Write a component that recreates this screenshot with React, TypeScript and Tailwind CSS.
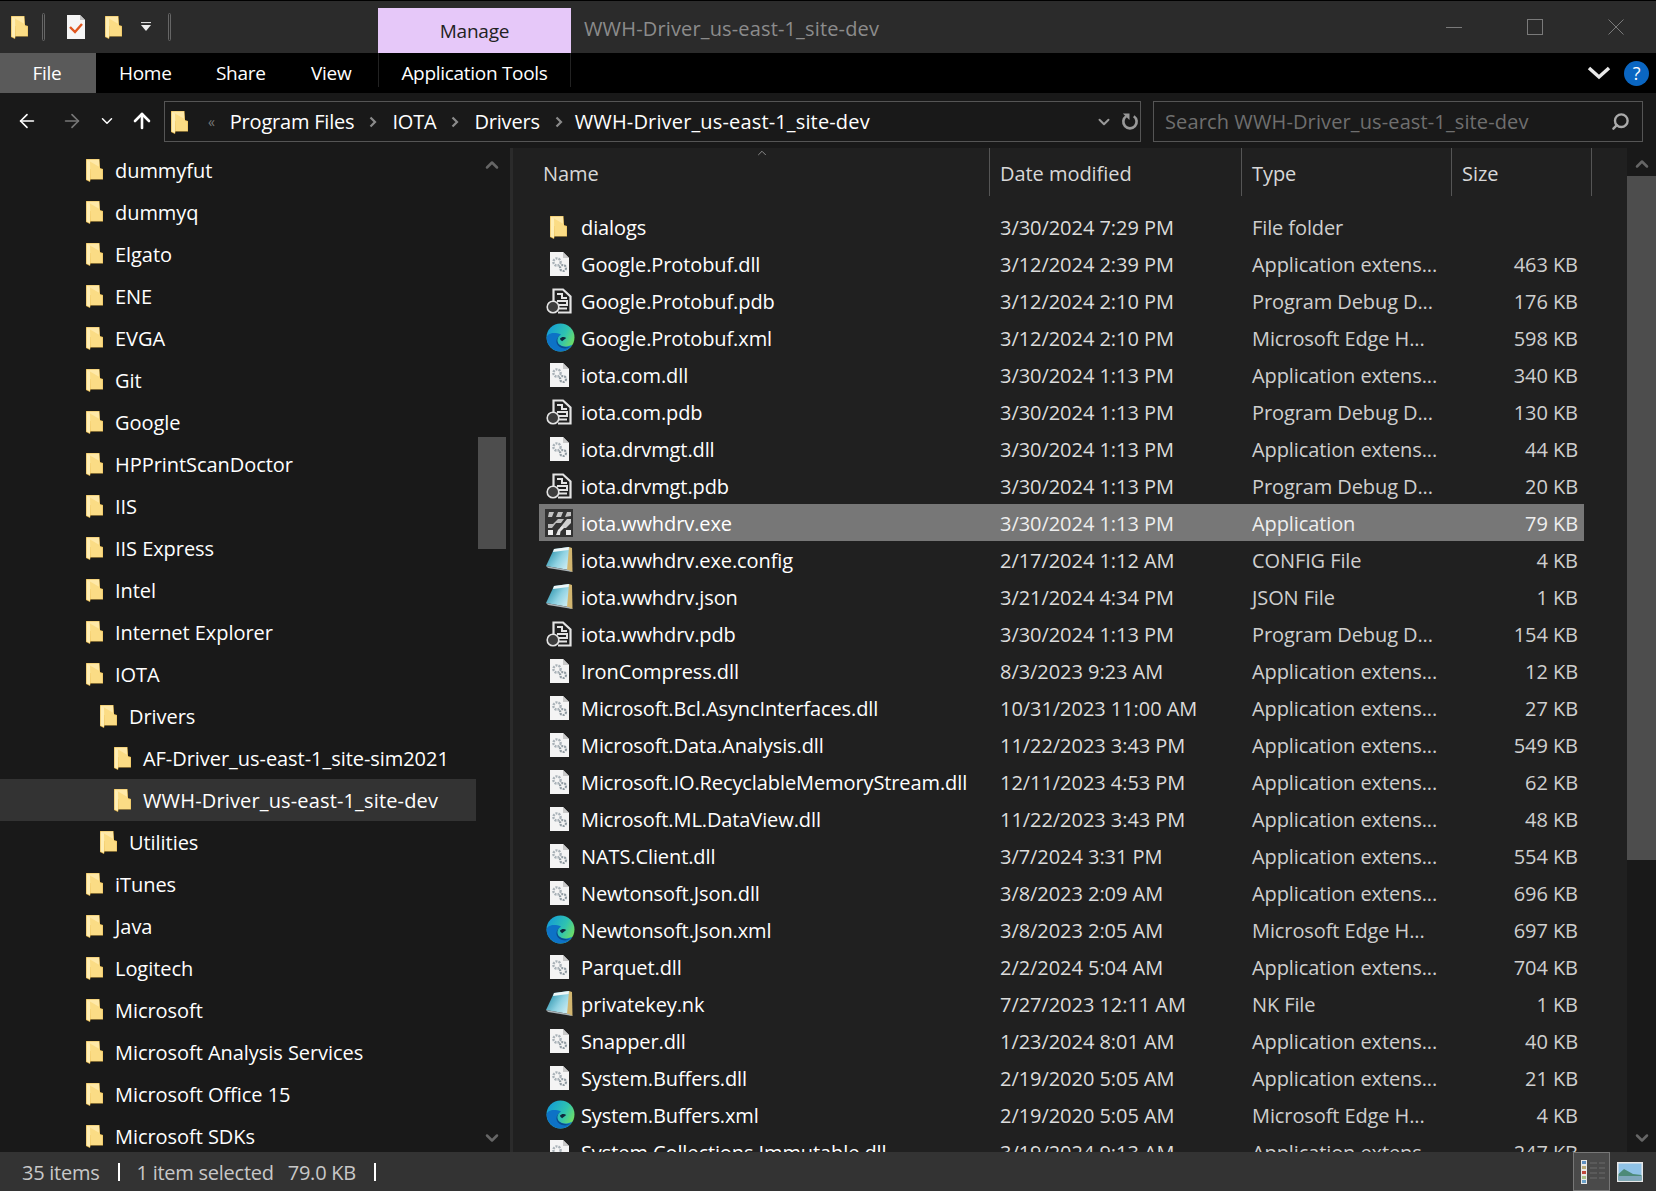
import { ChevronDown, ChevronUp, ArrowLeft, ArrowRight, ArrowUp, Search } from 'lucide-react';

const FolderIcon = () => (
  <svg viewBox="0 0 17 24" className="w-[17px] h-[24px] shrink-0">
    <path d="M0 1 H13.5 L14 10 L17 11 V21.5 H4.5 L4 24 L0 22 Z" fill="#e9bd55" />
    <path d="M1 1.5 H13 L13.5 11 H4 L1 3 Z" fill="#ffe9a8" />
    <path d="M4 3.5 L13.5 9 L14 11 L16.5 11.5 V21 H4.5 Z" fill="#fbdc85" />
    <path d="M0.6 2 L4 4 V23 L0.6 21.5 Z" fill="#ffeeb4" />
  </svg>
);

const DllIcon = () => (
  <svg viewBox="0 0 24 26" className="w-[24px] h-[26px]">
    <path d="M3 1 H16 L22 7 V25 H3 Z" fill="#f4f4f4" />
    <path d="M16 1 V7 H22 Z" fill="#c9c9c9" />
    <circle cx="10" cy="11" r="3.6" fill="none" stroke="#a9b2b8" strokeWidth="2.4" strokeDasharray="2 1" />
    <circle cx="16" cy="17" r="3" fill="none" stroke="#8f9aa1" strokeWidth="2.2" strokeDasharray="2 1" />
  </svg>
);

const PdbIcon = () => (
  <svg viewBox="0 0 26 26" className="w-[26px] h-[26px]">
    <path d="M7.5 13 V1.5 H17 L24.5 8.5 V24.5 H12" fill="none" stroke="#e4e4e4" strokeWidth="2.2" />
    <path d="M11 6 H16 V10 H21" fill="none" stroke="#e4e4e4" strokeWidth="2" />
    <path d="M11 13 H21 V17 H13 M13 20.5 H21" fill="none" stroke="#e4e4e4" strokeWidth="2" />
    <circle cx="7" cy="19" r="5.8" fill="#3d3d3d" stroke="#e4e4e4" strokeWidth="1.6" />
  </svg>
);

const EdgeIcon = () => (
  <svg viewBox="0 0 28 28" className="w-[29px] h-[29px] ml-[3px]">
    <defs>
      <linearGradient id="edgeTop" x1="0" y1="0.2" x2="1" y2="0.7">
        <stop offset="0" stopColor="#129bd8" />
        <stop offset="0.6" stopColor="#2fc3b0" />
        <stop offset="1" stopColor="#74e05e" />
      </linearGradient>
    </defs>
    <circle cx="14" cy="14" r="13.5" fill="url(#edgeTop)" />
    <path d="M0.6 14 C1 22 7 27.5 14 27.5 C19 27.5 23 25 25.5 21 C21 23 16 23.5 13 21 C9 18 10 13 14.5 11 C8 8.5 1.5 9.5 0.6 14 Z" fill="#0d72c6" />
    <path d="M14.5 11 C10 13 8 19 13 23 C16 25 20 25 23 23.5 C19 23.5 15.5 23 13 21 C10 18 10.5 13.5 14.5 11 Z" fill="#0a4c90" />
    <path d="M13.5 15 C15 13 18 13 19.5 14.5 L15.5 17.5 C14.5 17 13.5 16 13.5 15 Z" fill="#10263a" />
  </svg>
);

const ExeIcon = () => (
  <svg viewBox="0 0 28 28" className="w-[28px] h-[28px]">
    <rect width="28" height="28" fill="#333" />
    <path d="M4 3 H9 L7 8 H3 Z M13 3 H18 L16 8 H11 Z M22 3 H26 V7 L20 8 Z" fill="#c2c2c2" />
    <path d="M3 15 H8 L13 10 H19 L16 14 H11 L7 19 H3 Z" fill="#bdbdbd" />
    <path d="M18 15 L22 10 H26 V14 L21 19 H15 Z" fill="#cfcfcf" />
    <rect x="3" y="21" width="5" height="5" fill="#f0f0f0" />
    <rect x="21" y="21" width="5" height="5" fill="#f0f0f0" />
    <path d="M11 26 L13 21 L17 17 L19 19 L15.5 22.5 L15 26 Z" fill="#e4e4e4" />
  </svg>
);

const ConfigIcon = () => (
  <svg viewBox="0 0 28 28" className="w-[28px] h-[28px]">
    <defs>
      <linearGradient id="cfg" x1="0" y1="0.2" x2="1" y2="0.9">
        <stop offset="0" stopColor="#1f8ba6" />
        <stop offset="0.55" stopColor="#8fd2e2" />
        <stop offset="1" stopColor="#d4eff4" />
      </linearGradient>
    </defs>
    <path d="M9 3 L24 1 L24 24 L1 20 Z" fill="url(#cfg)" />
    <path d="M24 1 L27 2 L27.5 26 L22 24.5 Z" fill="#d2b670" />
    <path d="M9 3 L24 1 L23.5 4 L8 6 Z" fill="#eef6f7" />
    <path d="M1 20 L24 24 L27.5 26 L3 22 Z" fill="#aab4b8" />
  </svg>
);

const icons = {
  folder: <FolderIcon />,
  dll: <DllIcon />,
  pdb: <PdbIcon />,
  edge: <EdgeIcon />,
  exe: <ExeIcon />,
  cfg: <ConfigIcon />,
};

type Kind = keyof typeof icons;

const treeItems: [string, number][] = [
  ['dummyfut', 0],
  ['dummyq', 0],
  ['Elgato', 0],
  ['ENE', 0],
  ['EVGA', 0],
  ['Git', 0],
  ['Google', 0],
  ['HPPrintScanDoctor', 0],
  ['IIS', 0],
  ['IIS Express', 0],
  ['Intel', 0],
  ['Internet Explorer', 0],
  ['IOTA', 0],
  ['Drivers', 1],
  ['AF-Driver_us-east-1_site-sim2021', 2],
  ['WWH-Driver_us-east-1_site-dev', 2],
  ['Utilities', 1],
  ['iTunes', 0],
  ['Java', 0],
  ['Logitech', 0],
  ['Microsoft', 0],
  ['Microsoft Analysis Services', 0],
  ['Microsoft Office 15', 0],
  ['Microsoft SDKs', 0],
];

const EXT = 'Application extens...';
const PDB = 'Program Debug D...';
const XML = 'Microsoft Edge H...';

const files: [Kind, string, string, string, string][] = [
  ['folder', 'dialogs', '3/30/2024 7:29 PM', 'File folder', ''],
  ['dll', 'Google.Protobuf.dll', '3/12/2024 2:39 PM', EXT, '463 KB'],
  ['pdb', 'Google.Protobuf.pdb', '3/12/2024 2:10 PM', PDB, '176 KB'],
  ['edge', 'Google.Protobuf.xml', '3/12/2024 2:10 PM', XML, '598 KB'],
  ['dll', 'iota.com.dll', '3/30/2024 1:13 PM', EXT, '340 KB'],
  ['pdb', 'iota.com.pdb', '3/30/2024 1:13 PM', PDB, '130 KB'],
  ['dll', 'iota.drvmgt.dll', '3/30/2024 1:13 PM', EXT, '44 KB'],
  ['pdb', 'iota.drvmgt.pdb', '3/30/2024 1:13 PM', PDB, '20 KB'],
  ['exe', 'iota.wwhdrv.exe', '3/30/2024 1:13 PM', 'Application', '79 KB'],
  ['cfg', 'iota.wwhdrv.exe.config', '2/17/2024 1:12 AM', 'CONFIG File', '4 KB'],
  ['cfg', 'iota.wwhdrv.json', '3/21/2024 4:34 PM', 'JSON File', '1 KB'],
  ['pdb', 'iota.wwhdrv.pdb', '3/30/2024 1:13 PM', PDB, '154 KB'],
  ['dll', 'IronCompress.dll', '8/3/2023 9:23 AM', EXT, '12 KB'],
  ['dll', 'Microsoft.Bcl.AsyncInterfaces.dll', '10/31/2023 11:00 AM', EXT, '27 KB'],
  ['dll', 'Microsoft.Data.Analysis.dll', '11/22/2023 3:43 PM', EXT, '549 KB'],
  ['dll', 'Microsoft.IO.RecyclableMemoryStream.dll', '12/11/2023 4:53 PM', EXT, '62 KB'],
  ['dll', 'Microsoft.ML.DataView.dll', '11/22/2023 3:43 PM', EXT, '48 KB'],
  ['dll', 'NATS.Client.dll', '3/7/2024 3:31 PM', EXT, '554 KB'],
  ['dll', 'Newtonsoft.Json.dll', '3/8/2023 2:09 AM', EXT, '696 KB'],
  ['edge', 'Newtonsoft.Json.xml', '3/8/2023 2:05 AM', XML, '697 KB'],
  ['dll', 'Parquet.dll', '2/2/2024 5:04 AM', EXT, '704 KB'],
  ['cfg', 'privatekey.nk', '7/27/2023 12:11 AM', 'NK File', '1 KB'],
  ['dll', 'Snapper.dll', '1/23/2024 8:01 AM', EXT, '40 KB'],
  ['dll', 'System.Buffers.dll', '2/19/2020 5:05 AM', EXT, '21 KB'],
  ['edge', 'System.Buffers.xml', '2/19/2020 5:05 AM', XML, '4 KB'],
  ['dll', 'System.Collections.Immutable.dll', '3/19/2024 9:13 AM', EXT, '247 KB'],
];

const Crumb = () => (
  <svg viewBox="0 0 8 12" className="w-[8px] h-[12px] mx-[15px]">
    <path d="M1.5 1.5 L6 6 L1.5 10.5" stroke="#8a8a8a" strokeWidth="2.2" fill="none" />
  </svg>
);

const Scroller = ({ thumbClass }: { thumbClass: string }) => (
  <div className="flex flex-col items-center h-full">
    <ChevronUp className="w-[20px] h-[20px] text-[#666] mt-[6px] shrink-0" strokeWidth={3} />
    <div className={`w-full bg-[#4d4d4d] ${thumbClass}`} />
    <div className="flex-1" />
    <ChevronDown className="w-[20px] h-[20px] text-[#666] mb-[4px] shrink-0" strokeWidth={3} />
  </div>
);

export default function App() {
  return (
    <div className="w-[1656px] h-[1191px] overflow-hidden flex flex-col bg-[#191919] text-white font-['Open_Sans',sans-serif] text-[20px] tracking-[-0.05px]">
      {/* title bar */}
      <div className="h-[53px] shrink-0 bg-[#2b2b2b] border-t border-black flex items-end">
        <div className="flex items-center h-[52px] pl-[11px] w-[378px] shrink-0">
          <FolderIcon />
          <div className="w-[3px] h-[28px] border border-[#666] rounded-sm ml-[14px]" />
          <svg viewBox="0 0 20 26" className="w-[20px] h-[26px] ml-[21px]">
            <path d="M1 1 H14 L19 6 V25 H1 Z" fill="#f6f6f6" />
            <path d="M14 1 V6 H19 Z" fill="#c4c4c4" />
            <path d="M4 13 L9 18 L16 10" stroke="#e0561f" strokeWidth="2.4" fill="none" />
          </svg>
          <div className="ml-[19px]">
            <FolderIcon />
          </div>
          <svg viewBox="0 0 12 10" className="w-[12px] h-[10px] ml-[18px]">
            <path d="M1 0.5 H11" stroke="#ddd" strokeWidth="1.2" />
            <path d="M1 3 H11 L6 9 Z" fill="#eee" />
          </svg>
          <div className="w-[3px] h-[28px] border border-[#666] rounded-sm ml-[16px]" />
        </div>
        <div className="w-[193px] h-[45px] bg-[#e6c8f9] text-[#222] text-[19px] tracking-[-0.2px] flex items-center justify-center pt-[2px] shrink-0">
          Manage
        </div>
        <div className="h-[52px] flex items-center pl-[13px] pt-[3px] text-[#8c8c8c] tracking-[0.15px] flex-1">WWH-Driver_us-east-1_site-dev</div>
        <div className="h-[52px] flex items-center text-[#7a7a7a] gap-[65px] pr-[32px]">
          <svg viewBox="0 0 16 16" className="w-[16px] h-[16px]"><path d="M0 8.5 H16" stroke="currentColor" /></svg>
          <svg viewBox="0 0 16 16" className="w-[16px] h-[16px]"><rect x="0.5" y="0.5" width="15" height="15" fill="none" stroke="currentColor" /></svg>
          <svg viewBox="0 0 16 16" className="w-[16px] h-[16px]"><path d="M0.5 0.5 L15.5 15.5 M15.5 0.5 L0.5 15.5" stroke="currentColor" /></svg>
        </div>
      </div>

      {/* ribbon tabs */}
      <div className="h-[40px] shrink-0 bg-black flex items-center text-[19px] tracking-[-0.3px]">
        <div className="w-[96px] h-full bg-[#5a5a5a] flex items-center justify-center pr-[2px]">File</div>
        <div className="w-[282px] flex items-center pl-[23px]">
          <span className="w-[97px]">Home</span>
          <span className="w-[95px]">Share</span>
          <span>View</span>
        </div>
        <div className="w-[193px] h-[34px] self-start border-x border-[#222] flex items-center justify-center pt-[6px]">Application Tools</div>
        <div className="flex-1" />
        <svg viewBox="0 0 24 16" className="w-[24px] h-[16px] mr-[13px]">
          <path d="M2 3 L12 12 L22 3" stroke="#e8e8e8" strokeWidth="3.5" fill="none" />
        </svg>
        <div className="w-[25px] h-[25px] rounded-full bg-[#0a66c2] text-white flex items-center justify-center text-[18px] mr-[7px]">?</div>
      </div>

      {/* address bar */}
      <div className="h-[55px] shrink-0 flex items-center bg-[#191919] pt-[1px]">
        <div className="w-[164px] shrink-0 flex items-center pl-[16px]">
          <ArrowLeft className="w-[22px] h-[22px] text-white" strokeWidth={1.8} />
          <ArrowRight className="w-[22px] h-[22px] text-[#777] ml-[23px]" strokeWidth={1.8} />
          <ChevronDown className="w-[18px] h-[18px] text-white ml-[15px]" strokeWidth={2} />
          <ArrowUp className="w-[24px] h-[24px] text-white ml-[14px]" strokeWidth={2.6} />
        </div>
        <div className="w-[977px] h-[41px] border border-[#555] flex items-center pl-[6px] pt-[1px] tracking-[-0.2px]">
          <FolderIcon />
          <span className="text-[#777] text-[14px] ml-[20px] mr-[15px]">«</span>
          <span>Program Files</span>
          <Crumb />
          <span>IOTA</span>
          <Crumb />
          <span>Drivers</span>
          <Crumb />
          <span className="-ml-[3px] tracking-[0.15px]">WWH-Driver_us-east-1_site-dev</span>
          <div className="flex-1" />
          <ChevronDown className="w-[18px] h-[18px] text-[#999]" strokeWidth={2.6} />
          <svg viewBox="0 0 20 20" className="w-[19px] h-[19px] ml-[7px] mr-[1px]">
            <path d="M14.5 4.5 A7 7 0 1 1 6.5 4.5" fill="none" stroke="#999" strokeWidth="2.8" />
            <path d="M3 1.5 H10 V8.5 Z" fill="#999" />
          </svg>
        </div>
        <div className="w-[490px] h-[41px] ml-[12px] border border-[#555] flex items-center pl-[11px] pr-[12px] text-[#6f6f6f] pt-[1px]">
          <span className="flex-1 tracking-[0.12px]">Search WWH-Driver_us-east-1_site-dev</span>
          <Search className="w-[19px] h-[19px] text-[#aaa] -scale-x-100" strokeWidth={3} />
        </div>
      </div>

      {/* body */}
      <div className="flex-1 min-h-0 flex">
        {/* navigation tree */}
        <div className="w-[510px] shrink-0 flex overflow-hidden">
          <div className="w-[476px] shrink-0 pt-[1px]">
            {treeItems.map(([name, level]) => {
              const active = name === 'WWH-Driver_us-east-1_site-dev';
              const pad = level === 0 ? 'pl-[86px]' : level === 1 ? 'pl-[100px]' : 'pl-[114px]';
              return (
                <div key={name} className={`h-[42px] flex items-center whitespace-nowrap ${pad} ${active ? 'bg-[#333]' : ''}`}>
                  <FolderIcon />
                  <span className={`ml-[12px] pt-[2px] ${active ? 'tracking-[0.15px]' : ''}`}>{name}</span>
                </div>
              );
            })}
          </div>
          <div className="flex-1 pt-[1px]">
            <div className="w-[28px] ml-[2px] h-full">
              <Scroller thumbClass="mt-[262px] h-[112px]" />
            </div>
          </div>
        </div>
        <div className="w-[3px] shrink-0 bg-[#2b2b2b]" />

        {/* file list */}
        <div className="flex-1 min-w-0 flex bg-[#202020]">
          <div className="w-[1114px] shrink-0 overflow-hidden">
            <div className="h-[48px] flex items-stretch text-[#d8d8d8]">
              <div className="w-[477px] border-r border-[#555] pl-[30px] flex items-center relative">
                <span className="pt-[4px]">Name</span>
                <ChevronUp className="absolute left-[242px] top-[-2px] w-[14px] h-[14px] text-[#999]" strokeWidth={1.5} />
              </div>
              <div className="w-[252px] border-r border-[#555] pl-[10px] flex items-center"><span className="pt-[4px]">Date modified</span></div>
              <div className="w-[210px] border-r border-[#555] pl-[10px] flex items-center"><span className="pt-[4px]">Type</span></div>
              <div className="w-[140px] border-r border-[#555] pl-[10px] flex items-center"><span className="pt-[4px]">Size</span></div>
            </div>
            <div className="pt-[12px] pl-[26px]">
              {files.map(([kind, name, date, type, size]) => {
                const selected = name === 'iota.wwhdrv.exe';
                return (
                  <div key={name} className={`h-[37px] w-[1045px] flex items-center whitespace-nowrap ${selected ? 'bg-[#777]' : ''}`}>
                    <div className="w-[42px] h-full flex items-center justify-center shrink-0 pr-[3px]">{icons[kind]}</div>
                    <div className="w-[419px] shrink-0 pt-[2px] tracking-[-0.1px]">{name}</div>
                    <div className={`w-[252px] shrink-0 pt-[2px] tracking-[-0.05px] ${selected ? 'text-[#eee]' : 'text-[#dcdcdc]'}`}>{date}</div>
                    <div className={`w-[210px] shrink-0 pt-[2px] tracking-[-0.1px] ${selected ? 'text-[#eee]' : 'text-[#cfcfcf]'}`}>{type}</div>
                    <div className={`w-[116px] shrink-0 pt-[2px] text-right ${selected ? 'text-[#eee]' : 'text-[#cfcfcf]'}`}>{size}</div>
                  </div>
                );
              })}
            </div>
          </div>
          <div className="flex-1 bg-[#191919]">
            <Scroller thumbClass="mt-[2px] h-[684px]" />
          </div>
        </div>
      </div>

      {/* status bar */}
      <div className="h-[39px] shrink-0 bg-[#333] flex items-center text-[#c8c8c8] tracking-[-0.25px]">
        <span className="ml-[22px] pt-[2px]">35 items</span>
        <div className="w-[2px] h-[18px] bg-white ml-[18px]" />
        <span className="ml-[17px] pt-[2px]">1 item selected</span>
        <span className="ml-[14px] pt-[2px]">79.0 KB</span>
        <div className="w-[2px] h-[18px] bg-white ml-[18px]" />
        <div className="flex-1" />
        <div className="w-[37px] h-full border border-[#777] bg-[#4a4a4a] flex items-center justify-center">
          <svg viewBox="0 0 28 26" className="w-[28px] h-[26px]">
            <rect x="3" y="1" width="6" height="24" fill="#e8e8e8" />
            <rect x="4" y="2" width="4" height="3" fill="#5d8fc2" />
            <rect x="4" y="7" width="4" height="3" fill="#b8a878" />
            <rect x="4" y="12" width="4" height="3" fill="#c0483c" />
            <rect x="4" y="17" width="4" height="3" fill="#a8c08a" />
            <rect x="4" y="21" width="4" height="3" fill="#6aa0c8" />
            <path d="M12 4 H19 M21 4 H27 M12 9 H19 M21 9 H27 M12 14 H19 M21 14 H27 M12 19 H19 M21 19 H27" stroke="#6a6a6a" />
          </svg>
        </div>
        <svg viewBox="0 0 26 20" className="w-[26px] h-[20px] ml-[7px] mr-[13px]">
          <rect width="26" height="20" fill="#e8e8e8" />
          <rect x="1.5" y="1.5" width="23" height="17" fill="#8fc2e6" />
          <path d="M1.5 12 L7 7 L16 12 L24.5 13 V18.5 H1.5 Z" fill="#4d8a78" />
          <rect x="1.5" y="14" width="23" height="4.5" fill="#7fa6ba" />
        </svg>
      </div>
    </div>
  );
}
